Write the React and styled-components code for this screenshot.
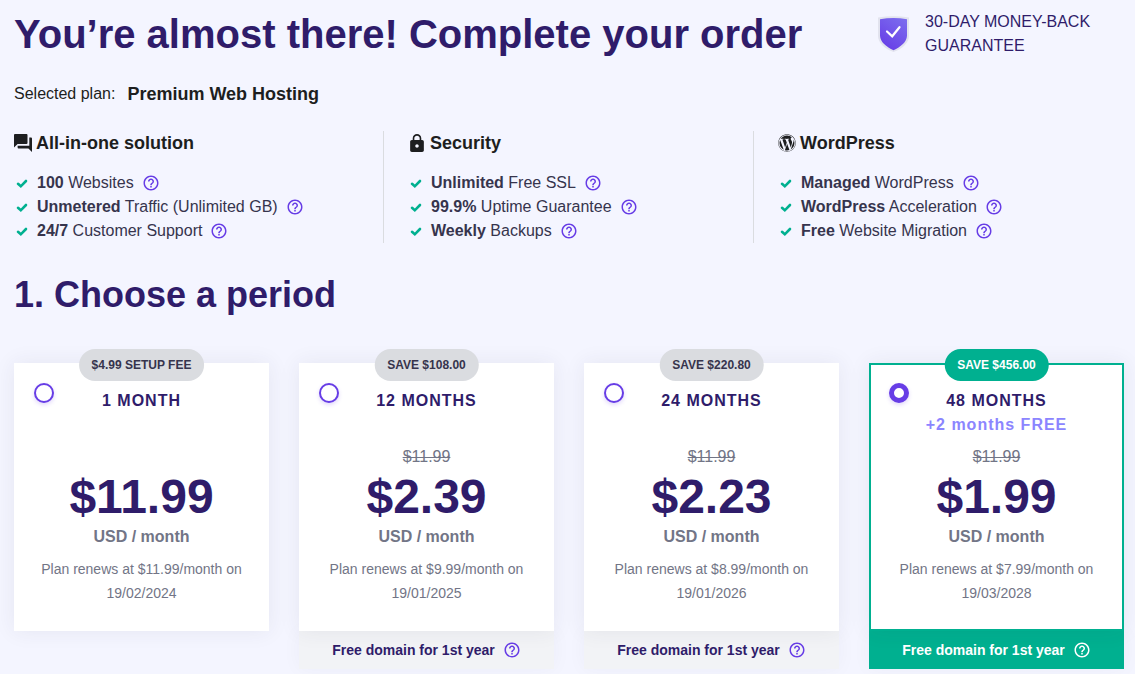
import React, { useState } from "react";
import styled, { createGlobalStyle } from "styled-components";
import { FaWordpress } from "react-icons/fa";

const color = {
  page: "#f4f5ff",
  deep: "#2f1c6a",
  ink: "#1d1e20",
  body: "#36344d",
  muted: "#727586",
  line: "#dadce0",
  violet: "#673de6",
  lilac: "#8c85ff",
  green: "#00b090",
  pale: "#f2f3f6",
};

const GlobalStyle = createGlobalStyle`
  *, *::before, *::after { box-sizing: border-box; }
  body {
    margin: 0;
    background: ${color.page};
    color: ${color.body};
    font: 16px/24px "Liberation Sans", Arial, sans-serif;
  }
`;

const Page = styled.main`
  padding: 10px 11px 5px 14px;
`;

const Header = styled.header`
  display: flex;
  justify-content: space-between;
  align-items: center;
`;

const Title = styled.h1`
  margin: 0;
  color: ${color.deep};
  font-size: 40px;
  line-height: 48px;
`;

const Guarantee = styled.div`
  flex: 0 0 246px;
  display: flex;
  align-items: center;
  gap: 16px;
  color: ${color.deep};
  text-transform: uppercase;

  svg { flex: none; }
`;

const SelectedPlan = styled.p`
  display: flex;
  gap: 12px;
  margin: 24px 0 25px;
  color: ${color.ink};

  strong { font-size: 18px; }
`;

const Benefits = styled.section`
  display: grid;
  grid-template-columns: repeat(3, 1fr);
`;

const BenefitGroup = styled.div`
  padding-left: 24px;
  border-right: 1px solid ${color.line};

  &:first-child { padding-left: 0; }
  &:last-child { border-right: 0; }
`;

const BenefitTitle = styled.h3`
  display: flex;
  align-items: center;
  gap: 4px;
  margin: 0 0 16px;
  color: ${color.ink};
  font-size: 18px;
  line-height: 24px;
`;

const BenefitList = styled.ul`
  margin: 0;
  padding: 0;
  list-style: none;
`;

const Benefit = styled.li`
  display: flex;
  align-items: center;
  padding-left: 2px;

  > svg { margin-right: 9px; }
`;

const HelpButton = styled.button`
  display: flex;
  margin: 0 0 0 8px;
  padding: 0;
  border: 0;
  background: none;
  color: ${(p) => (p.$onGreen ? "#fff" : color.violet)};
  cursor: pointer;
`;

const SectionTitle = styled.h2`
  margin: 28px 0 44px;
  color: ${color.deep};
  font-size: 36px;
  line-height: 48px;
`;

const Periods = styled.div`
  display: grid;
  grid-template-columns: repeat(4, 1fr);
  align-items: start;
  gap: 30px;
`;

const PeriodCard = styled.article`
  position: relative;
  text-align: center;
`;

const CardBody = styled.label`
  position: relative;
  z-index: 1;
  display: block;
  padding: 24px 22px;
  border: 2px solid ${(p) => (p.$selected ? color.green : "#fff")};
  background: #fff;
  box-shadow: 0 0 20px rgba(54, 52, 77, 0.08);
  color: ${color.muted};
  cursor: pointer;
`;

const Tag = styled.span`
  position: absolute;
  top: -14px;
  left: 50%;
  z-index: 2;
  padding: 0 13px;
  border-radius: 16px;
  background: ${(p) => (p.$selected ? color.green : color.line)};
  color: ${(p) => (p.$selected ? "#fff" : color.body)};
  font-size: 12px;
  font-weight: bold;
  line-height: 32px;
  white-space: nowrap;
  transform: translateX(-50%);
`;

const Radio = styled.input`
  position: absolute;
  top: 18px;
  left: 18px;
  appearance: none;
  width: 20px;
  height: 20px;
  margin: 0;
  border: 2px solid ${color.violet};
  border-radius: 50%;
  background: #fff;
  box-shadow: 0 2px 4px rgba(103, 61, 230, 0.2);

  &:checked { border-width: 5px; }
`;

const Duration = styled.strong`
  display: block;
  color: ${color.deep};
  letter-spacing: 1px;
`;

const Bonus = styled.strong`
  display: block;
  min-height: 24px;
  margin-bottom: 8px;
  color: ${color.lilac};
  letter-spacing: 1px;
`;

const OldPrice = styled.del`
  display: block;
  min-height: 24px;
`;

const Price = styled.strong`
  display: block;
  color: ${color.deep};
  font-size: 48px;
  line-height: 56px;
`;

const Unit = styled.strong`
  display: block;
`;

const Renewal = styled.span`
  display: block;
  margin-top: 8px;
  font-size: 14px;
`;

const Perk = styled.div`
  display: flex;
  justify-content: center;
  align-items: center;
  height: 38px;
  background: ${(p) => (p.$selected ? color.green : color.pale)};
  box-shadow: 0 0 20px rgba(54, 52, 77, 0.04);
  color: ${(p) => (p.$selected ? "#fff" : color.deep)};
  font-size: 14px;
  font-weight: bold;
`;

const ShieldIcon = () => (
  <svg width="31" height="36" viewBox="0 0 31 36" aria-hidden="true">
    <defs>
      <linearGradient id="shield" x1="0.2" y1="1" x2="0.8" y2="0">
        <stop offset="0" stopColor="#673de6" />
        <stop offset="1" stopColor="#7b6bee" />
      </linearGradient>
    </defs>
    <path d="M0 1.500Q15.500-1 31 1.500V20C31 27 24 33 15.500 36C7 33 0 27 0 20Z" fill="#e2e3ee" />
    <path d="M2 3.200Q15.500 1 29 3.200V19.500C29 26 22.500 31 15.500 34.200C8.500 31 2 26 2 19.500Z" fill="url(#shield)" />
    <path d="M9 15.500L14.200 20.300L21.500 11.200" fill="none" stroke="#fff" strokeWidth="2.200" strokeLinecap="round" />
  </svg>
);

const ForumIcon = () => (
  <svg width="18" height="18" viewBox="2 2 20 20" fill="currentColor" aria-hidden="true">
    <path d="M21 6h-2v9H6v2c0 .55.45 1 1 1h11l4 4V7c0-.55-.45-1-1-1zm-4 6V3c0-.55-.45-1-1-1H3c-.55 0-1 .45-1 1v14l4-4h10c.55 0 1-.45 1-1z" />
  </svg>
);

const LockIcon = () => (
  <svg width="18" height="18" viewBox="1.500 1 21 21" fill="currentColor" aria-hidden="true">
    <path d="M18 8h-1V6c0-2.760-2.240-5-5-5S7 3.240 7 6v2H6c-1.100 0-2 .9-2 2v10c0 1.100.9 2 2 2h12c1.100 0 2-.9 2-2V10c0-1.100-.9-2-2-2zm-6 9c-1.100 0-2-.9-2-2s.9-2 2-2 2 .9 2 2-.9 2-2 2zm3.100-9H8.900V6c0-1.710 1.390-3.100 3.100-3.100 1.710 0 3.100 1.390 3.100 3.100v2z" />
  </svg>
);

const CheckIcon = () => (
  <svg width="12" height="12" viewBox="0 0 12 12" aria-hidden="true">
    <path
      d="M2 6.800L4.800 9.300L10 4"
      fill="none"
      stroke={color.green}
      strokeWidth="2.600"
      strokeLinecap="round"
    />
  </svg>
);

const Help = ({ onGreen }) => (
  <HelpButton type="button" aria-label="More information" $onGreen={onGreen}>
    <svg width="18" height="18" viewBox="0 0 24 24" fill="currentColor" aria-hidden="true">
      <path d="M11 18h2v-2h-2v2zm1-16C6.480 2 2 6.480 2 12s4.480 10 10 10 10-4.480 10-10S17.520 2 12 2zm0 18c-4.410 0-8-3.590-8-8s3.590-8 8-8 8 3.590 8 8-3.590 8-8 8zm0-14c-2.210 0-4 1.790-4 4h2c0-1.100.9-2 2-2s2 .9 2 2c0 2-3 1.750-3 5h2c0-2.250 3-2.500 3-5 0-2.210-1.790-4-4-4z" />
    </svg>
  </HelpButton>
);

const benefitGroups = [
  {
    title: "All-in-one solution",
    icon: <ForumIcon />,
    items: [["100", "Websites"], ["Unmetered", "Traffic (Unlimited GB)"], ["24/7", "Customer Support"]],
  },
  {
    title: "Security",
    icon: <LockIcon />,
    items: [["Unlimited", "Free SSL"], ["99.9%", "Uptime Guarantee"], ["Weekly", "Backups"]],
  },
  {
    title: "WordPress",
    icon: <FaWordpress size={18} aria-hidden="true" />,
    items: [["Managed", "WordPress"], ["WordPress", "Acceleration"], ["Free", "Website Migration"]],
  },
];

const periods = [
  { id: "1", tag: "$4.99 SETUP FEE", duration: "1 MONTH", price: "$11.99", renews: "$11.99", date: "19/02/2024" },
  { id: "12", tag: "SAVE $108.00", duration: "12 MONTHS", old: "$11.99", price: "$2.39", renews: "$9.99", date: "19/01/2025", perk: true },
  { id: "24", tag: "SAVE $220.80", duration: "24 MONTHS", old: "$11.99", price: "$2.23", renews: "$8.99", date: "19/01/2026", perk: true },
  { id: "48", tag: "SAVE $456.00", duration: "48 MONTHS", bonus: "+2 months FREE", old: "$11.99", price: "$1.99", renews: "$7.99", date: "19/03/2028", perk: true },
];

export default function App() {
  const [selected, setSelected] = useState("48");

  return (
    <>
      <GlobalStyle />
      <Page>
        <Header>
          <Title>You’re almost there! Complete your order</Title>
          <Guarantee>
            <ShieldIcon />
            <span>30-day money-back guarantee</span>
          </Guarantee>
        </Header>

        <SelectedPlan>
          <span>Selected plan:</span>
          <strong>Premium Web Hosting</strong>
        </SelectedPlan>

        <Benefits>
          {benefitGroups.map((group) => (
            <BenefitGroup key={group.title}>
              <BenefitTitle>
                {group.icon}
                {group.title}
              </BenefitTitle>
              <BenefitList>
                {group.items.map(([strong, rest]) => (
                  <Benefit key={rest}>
                    <CheckIcon />
                    <span>
                      <strong>{strong}</strong> {rest}
                    </span>
                    <Help />
                  </Benefit>
                ))}
              </BenefitList>
            </BenefitGroup>
          ))}
        </Benefits>

        <SectionTitle>1. Choose a period</SectionTitle>

        <Periods>
          {periods.map((p) => {
            const active = p.id === selected;
            return (
              <PeriodCard key={p.id}>
                <Tag $selected={active}>{p.tag}</Tag>
                <CardBody $selected={active}>
                  <Radio
                    type="radio"
                    name="period"
                    value={p.id}
                    checked={active}
                    onChange={() => setSelected(p.id)}
                  />
                  <Duration>{p.duration}</Duration>
                  <Bonus>{p.bonus}</Bonus>
                  <OldPrice>{p.old}</OldPrice>
                  <Price>{p.price}</Price>
                  <Unit>USD / month</Unit>
                  <Renewal>
                    Plan renews at {p.renews}/month on {p.date}
                  </Renewal>
                </CardBody>
                {p.perk && (
                  <Perk $selected={active}>
                    Free domain for 1st year
                    <Help onGreen={active} />
                  </Perk>
                )}
              </PeriodCard>
            );
          })}
        </Periods>
      </Page>
    </>
  );
}
